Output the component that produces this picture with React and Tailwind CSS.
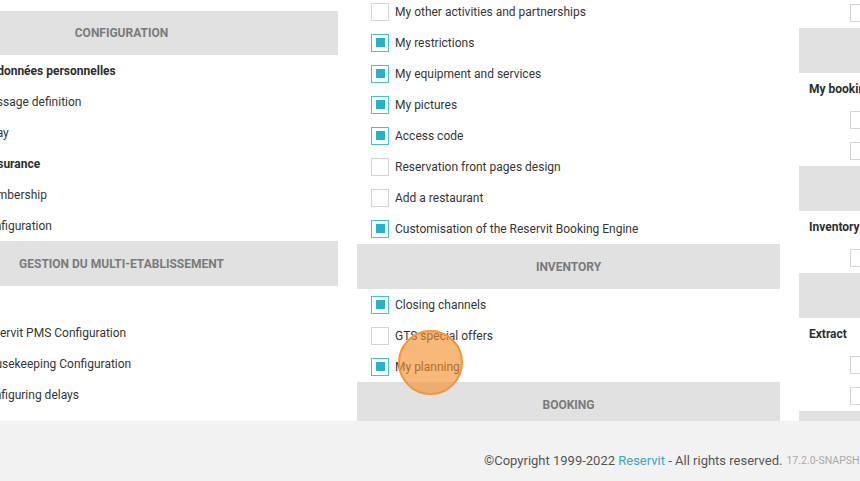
import React from "react";

const font = { fontFamily: "Roboto, 'Noto Sans', sans-serif" };

function Box({ checked }) {
  return checked ? (
    <span className="flex h-[18px] w-[18px] shrink-0 items-center justify-center border border-[#4cc0ce] bg-white">
      <span className="h-[9px] w-[9px] bg-[#27b3c7]" />
    </span>
  ) : (
    <span className="h-[18px] w-[18px] shrink-0 border border-[#d4d4d4] bg-white" />
  );
}

function Band({ title, short }) {
  return (
    <div
      className={`flex ${short ? "h-[44px]" : "h-[45px]"} items-center justify-center bg-[#e1e1e1] text-[12px] font-bold uppercase text-[#7a7a7a]`}
    >
      {title}
    </div>
  );
}

function CheckRow({ label, checked, pl = "pl-[14px]" }) {
  return (
    <div className={`flex h-[31px] items-center gap-[6px] ${pl} whitespace-nowrap text-[12px] text-[#363636]`}>
      <Box checked={checked} />
      <span>{label}</span>
    </div>
  );
}

function Sub({ label, pl = "pl-[10px]" }) {
  return (
    <div className={`flex h-[31px] items-center ${pl} whitespace-nowrap text-[12px] font-bold text-[#2e2e2e]`}>
      {label}
    </div>
  );
}

function LeftItem({ label }) {
  return (
    <div className="flex h-[31px] items-center gap-[7px] pl-[50px] whitespace-nowrap text-[12px] text-[#363636]">
      <Box checked={false} />
      <span>{label}</span>
    </div>
  );
}

export default function App() {
  return (
    <div className="h-[481px] w-[860px] overflow-hidden bg-[#f2f2f2]" style={font}>
      <div className="h-[421px] overflow-hidden bg-white">
        <div className="ml-[-85px] flex gap-[19px]">
          {/* left column */}
          <div className="ml-[-10px] mt-[-20px] w-[433px] shrink-0">
            <Sub label="Privacy policy" pl="pl-[20px]" />
            <Band title="Configuration" short />
            <Sub label="Mes données personnelles" pl="pl-[66px]" />
            <LeftItem label="Message definition" />
            <LeftItem label="Relay" />
            <Sub label="Assurance" pl="pl-[78px]" />
            <LeftItem label="Membership" />
            <LeftItem label="Configuration" />
            <Band title="Gestion du multi-etablissement" />
            <div className="h-[31px]" />
            <LeftItem label="Reservit PMS Configuration" />
            <LeftItem label="Housekeeping Configuration" />
            <LeftItem label="Configuring delays" />
            <LeftItem label="Accounting" />
          </div>
          {/* middle column */}
          <div className="mt-[-4px] w-[423px] shrink-0">
            <CheckRow label="My other activities and partnerships" />
            <CheckRow label="My restrictions" checked />
            <CheckRow label="My equipment and services" checked />
            <CheckRow label="My pictures" checked />
            <CheckRow label="Access code" checked />
            <CheckRow label="Reservation front pages design" />
            <CheckRow label="Add a restaurant" />
            <CheckRow label="Customisation of the Reservit Booking Engine" checked />
            <Band title="Inventory" />
            <CheckRow label="Closing channels" checked />
            <CheckRow label="GTS special offers" />
            <div className="relative">
              <CheckRow label="My planning" checked />
              <div className="absolute left-[41px] top-[-21px] h-[65px] w-[65px] rounded-full border-2 border-[#f3953a] bg-[rgba(244,140,38,0.62)]" />
            </div>
            <Band title="Booking" />
          </div>
          {/* right column */}
          <div className="mt-[-3px] w-[423px] shrink-0">
            <CheckRow label="Export" pl="pl-[51px]" />
            <Band title="Reports" />
            <Sub label="My bookings" />
            <CheckRow label="Bookings list" pl="pl-[51px]" />
            <CheckRow label="Booking details" pl="pl-[51px]" />
            <Band title="Statistics" />
            <Sub label="Inventory" />
            <CheckRow label="Inventory report" pl="pl-[51px]" />
            <Band title="Exports" />
            <Sub label="Extract" />
            <CheckRow label="Extract bookings" pl="pl-[51px]" />
            <CheckRow label="Extract invoices" pl="pl-[51px]" />
            <Band title="Other" />
          </div>
        </div>
      </div>
      <div className="flex h-[60px] items-center whitespace-nowrap pl-[484px] pt-[20px]">
        <span className="text-[13px] text-[#555]">
          ©Copyright 1999-2022 <span className="text-[#3ba7b9]">Reservit</span> - All rights reserved.
        </span>
        <span className="ml-[4px] text-[10.5px] text-[#aaa]">17.2.0-SNAPSHOT</span>
      </div>
    </div>
  );
}
